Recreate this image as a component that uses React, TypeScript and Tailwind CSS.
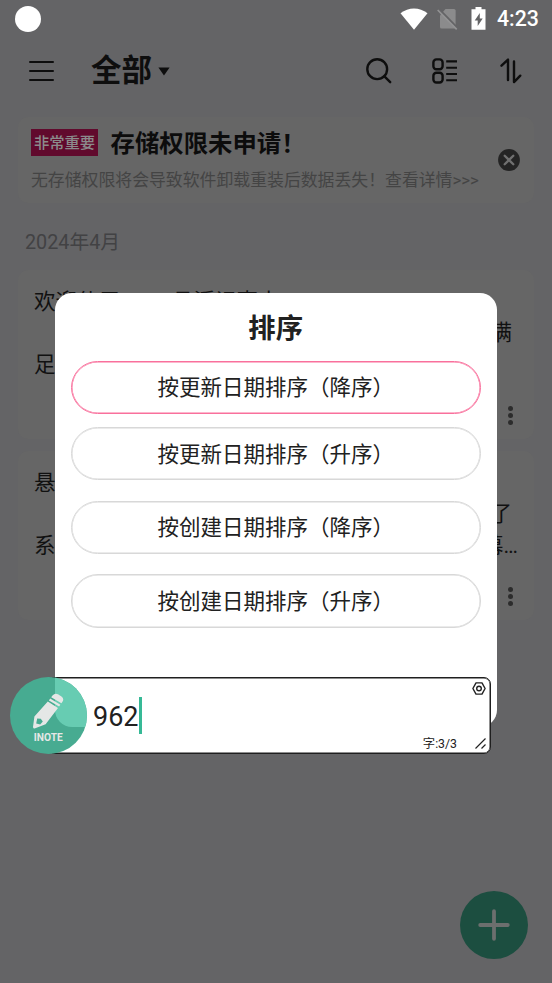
type NoteLine = { start?: string; end?: string; flush?: boolean };
type Note = { id: number; lines: NoteLine[] };

const notes: Note[] = [
  {
    id: 1,
    lines: [{ start: "欢迎使用INote悬浮记事本" }, { end: "满" }, { start: "足" }],
  },
  {
    id: 2,
    lines: [{ start: "悬" }, { end: "了" }, { start: "系", end: "幕…", flush: true }],
  },
];

const sortOptions = [
  { label: "按更新日期排序（降序）", active: true, gap: "mt-0" },
  { label: "按更新日期排序（升序）", active: false, gap: "mt-[13px]" },
  { label: "按创建日期排序（降序）", active: false, gap: "mt-[20.5px]" },
  { label: "按创建日期排序（升序）", active: false, gap: "mt-[20.5px]" },
];

function StatusBar() {
  return (
    <div className="flex h-9 items-center justify-between pl-[15px] pr-[13px] pt-px">
      <div className="size-[26px] rounded-full bg-white" />
      <div className="flex items-center text-white">
        <svg width="28" height="22" viewBox="0 0 28 22" fill="currentColor">
          <path d="M0.5 5.3C8.5-1.1 19.5-1.1 27.5 5.3L14 21.7Z" />
        </svg>
        <svg className="ml-[9px]" width="21" height="22" viewBox="0 0 21 22">
          <path d="M3 7.5L8.5 1H17a1.6 1.6 0 0 1 1.6 1.6V19a1.6 1.6 0 0 1-1.6 1.6H4.6A1.6 1.6 0 0 1 3 19Z" fill="#8b8b8c" />
          <path d="M2.2 1.2L20.5 20" stroke="#646466" strokeWidth="2" />
          <path d="M0.7 2L19.7 21.3" stroke="#939394" strokeWidth="1.7" />
        </svg>
        <svg className="ml-[13px]" width="15" height="23" viewBox="0 0 15 23">
          <path d="M4.5 0h6v2.2H14.5V22.8H0.5V2.2h4Z" fill="currentColor" />
          <path d="M8.8 6L3.7 13.6h3v5.5l5-7.7h-2.9Z" fill="#646466" />
        </svg>
        <span className="ml-[11px] w-[42px] whitespace-nowrap pt-px text-[21.3px] font-medium leading-none">
          4:23
        </span>
      </div>
    </div>
  );
}

function Header() {
  return (
    <header className="flex h-[70px] items-center justify-between pl-[29px] pr-[30px] text-[#0e0e0e]">
      <div className="flex items-center">
        <div className="flex w-[25px] flex-col gap-[7px]">
          <span className="h-[2px] rounded-full bg-[#0e0e0e]" />
          <span className="h-[2px] rounded-full bg-[#0e0e0e]" />
          <span className="h-[2px] rounded-full bg-[#0e0e0e]" />
        </div>
        <h1 className="ml-[37px] pt-px text-[30.5px] font-bold leading-none">全部</h1>
        <svg className="ml-[6px]" width="12" height="9" viewBox="0 0 12 9">
          <path d="M0.4 0.4h11.2L6 8.6Z" fill="currentColor" />
        </svg>
      </div>
      <div className="flex items-center">
        <svg width="26" height="26" viewBox="0 0 26 26" fill="none" stroke="currentColor" strokeWidth="2.4" strokeLinecap="round">
          <circle cx="11.2" cy="11.2" r="9.9" />
          <path d="M18.4 18.4L24.2 24.2" />
        </svg>
        <svg className="ml-[40px]" width="26" height="26" viewBox="0 0 26 26" fill="none" stroke="currentColor" strokeWidth="2.4">
          <rect x="1.4" y="1.4" width="9.2" height="9.8" rx="3" />
          <rect x="1.4" y="14.7" width="9.2" height="9.8" rx="3" />
          <path d="M14.2 3.4H25M14.2 9.7H25M14.2 16H25M14.2 22.3H25" strokeWidth="2.1" />
        </svg>
        <svg className="ml-[42px]" width="22" height="26" viewBox="0 0 22 26" fill="none" stroke="currentColor" strokeWidth="2.4" strokeLinejoin="round" strokeLinecap="round">
          <path d="M1.5 7.7L8 1.6V22" />
          <path d="M14 3.5V24.1L20.3 17.7" />
        </svg>
      </div>
    </header>
  );
}

function PermissionNotice() {
  return (
    <section className="mx-[18px] mt-[11px] flex h-[86px] items-center justify-between rounded-[10px] bg-[#666666] pl-[13px] pr-[14px]">
      <div className="pt-px">
        <div className="flex items-center">
          <span className="flex h-[27px] w-[67px] items-center justify-center bg-[#610a2d] pt-[2px] text-[15.3px] font-medium leading-none text-[#8b8b8b]">
            非常重要
          </span>
          <span className="ml-[12.5px] whitespace-nowrap pt-[2px] text-[24.4px] font-bold leading-[27px] text-[#0c0c0c]">
            存储权限未申请！
          </span>
        </div>
        <p className="mt-[10px] whitespace-nowrap text-[16.86px] leading-[26px] text-[#444444]">
          无存储权限将会导致软件卸载重装后数据丢失！查看详情&gt;&gt;&gt;
        </p>
      </div>
      <svg width="22" height="22" viewBox="0 0 22 22">
        <circle cx="11" cy="11" r="10.9" fill="#242424" />
        <path d="M6.7 6.7L15.3 15.3M15.3 6.7L6.7 15.3" stroke="#707070" strokeWidth="2.3" strokeLinecap="round" />
      </svg>
    </section>
  );
}

function NoteCard({ note }: { note: Note }) {
  return (
    <article className="flex h-[169px] flex-col justify-between rounded-[10px] bg-[#666666] px-4 pb-[14px] pt-4">
      <div className="text-[21.5px] leading-[31.3px] text-[#111111]">
        {note.lines.map((line, index) => (
          <p key={index} className="flex justify-between whitespace-nowrap">
            <span>{line.start}</span>
            <span className={line.flush ? "" : "mr-[6px]"}>{line.end}</span>
          </p>
        ))}
      </div>
      <div className="mr-[5px] flex flex-col items-center gap-[2px] self-end">
        <span className="size-[5px] rounded-full bg-[#2c2c2c]" />
        <span className="size-[5px] rounded-full bg-[#2c2c2c]" />
        <span className="size-[5px] rounded-full bg-[#2c2c2c]" />
      </div>
    </article>
  );
}

function SortDialog() {
  return (
    <div className="absolute left-[55px] top-[292.5px] flex h-[434.5px] w-[441.5px] flex-col rounded-[17px] bg-white px-[15.5px] text-[#212121]">
      <h2 className="mt-[21px] text-center text-[27.4px] font-bold leading-[30px]">排序</h2>
      <div className="mt-[17px] flex flex-col">
        {sortOptions.map((option) => (
          <button
            key={option.label}
            className={`${option.gap} flex h-[53.3px] items-center justify-center rounded-full border pt-[2px] text-[21.5px] leading-none ${
              option.active
                ? "border-[#f9709c] shadow-[inset_0_0_0_0.5px_#f9709c]"
                : "border-[#d8d8d8] shadow-[inset_0_0_0_0.5px_#d8d8d8]"
            }`}
          >
            {option.label}
          </button>
        ))}
      </div>
    </div>
  );
}

function FloatingEditor() {
  return (
    <div className="absolute left-[48px] top-[677px] flex h-[77px] w-[443px] justify-between rounded-[7px] border border-[#1f1f1f] bg-white pl-[44px] shadow-[inset_0_0_0_0.5px_#1f1f1f]">
      <div className="flex items-center text-[27px] leading-none text-[#212121]">
        <span className="pt-[4px]">962</span>
        <span className="h-[37px] w-[3px] bg-[#36b996]" />
      </div>
      <div className="flex flex-col items-end justify-between pb-px pr-[4px] pt-[4px] text-[#222222]">
        <svg width="14" height="13" viewBox="0 0 14 13" fill="none" stroke="currentColor" strokeWidth="1.4" strokeLinejoin="round">
          <path d="M4 0.9h6L13.1 6.5 10 12.1H4L0.9 6.5Z" />
          <circle cx="7" cy="6.5" r="2.3" />
        </svg>
        <div className="flex items-center gap-[18px]">
          <span className="pt-px text-[12.3px] leading-[16px]">字:3/3</span>
          <svg width="11" height="11" viewBox="0 0 11 11" stroke="currentColor" strokeWidth="1.2">
            <path d="M0.5 10.5L10.5 0.5M6.5 10.5L10.5 6.5" />
          </svg>
        </div>
      </div>
    </div>
  );
}

function NoteBubble() {
  return (
    <div className="absolute left-[10px] top-[677px] flex size-[76.5px] flex-col items-center overflow-hidden rounded-full bg-[#47ab91]">
      {/* the dialog corner showing through the bubble */}
      <div className="absolute left-[45px] top-0 h-[50px] w-8 rounded-bl-[17px] bg-[#67ccb2]" />
      <svg className="relative mt-[16px]" width="32" height="36" viewBox="0 0 32 36" fill="#e5e7e6">
        <path d="M20.5 2.6Q22.8-0.4 26 1.2L29.8 3.8Q32.2 5.8 30.6 8.5L29.4 10.2 19.2 4.2Z" />
        <path d="M18.2 5.6L28.4 11.7 27.1 13.6 16.9 7.4Z" />
        <path d="M15.8 8.6L26 15 13.6 31.2 2.6 35.6Q1 35.6 1 34L2.4 23.6ZM5.2 25.4L4.2 30.6 8.2 31.4 10.8 28.4 8.8 25.8Z" fillRule="evenodd" />
      </svg>
      <span className="relative mt-[4px] text-[10.2px] font-bold leading-none text-[#e5e7e6]">INOTE</span>
    </div>
  );
}

export default function App() {
  return (
    <div className="relative h-[983px] w-[552px] overflow-hidden bg-[#646466] font-[Roboto,'Noto_Sans_CJK_SC',sans-serif]">
      <StatusBar />
      <Header />
      <main>
        <PermissionNotice />
        <p className="ml-[25px] mt-[25px] text-[19.8px] leading-[30px] text-[#424244]">2024年4月</p>
        <div className="mx-[18px] mt-[12px] flex flex-col gap-3">
          {notes.map((note) => (
            <NoteCard key={note.id} note={note} />
          ))}
        </div>
      </main>
      <button className="absolute left-[460px] top-[891px] flex size-[67.5px] items-center justify-center rounded-full bg-[#1c4e40]">
        <svg width="32" height="32" viewBox="0 0 32 32" stroke="#6c6f6e" strokeWidth="3.8" strokeLinecap="round">
          <path d="M16 2.2V29.8M2.2 16H29.8" />
        </svg>
      </button>
      <SortDialog />
      <FloatingEditor />
      <NoteBubble />
    </div>
  );
}
